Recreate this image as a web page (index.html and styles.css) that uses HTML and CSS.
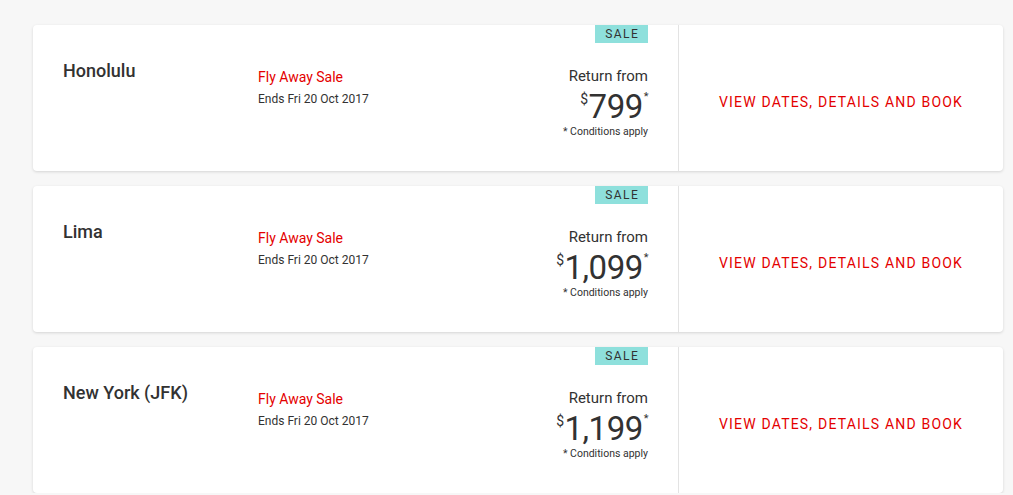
FILE: index.html
```html
<!DOCTYPE html>
<html lang="en">
<head>
    <meta charset="UTF-8">
    <meta name="viewport" content="width=device-width, initial-scale=1.0">
    <title>Fly Away Sale</title>
    <link rel="stylesheet" href="styles.css">
</head>
<body>
    <main class="deals">
        <div class="deal">
            <div class="deal-info">
                <h2 class="city">Honolulu</h2>
                <div class="sale">
                    <div class="sale-name">Fly Away Sale</div>
                    <div class="sale-ends">Ends Fri 20 Oct 2017</div>
                </div>
                <div class="price">
                    <span class="badge">SALE</span>
                    <div class="price-label">Return from</div>
                    <div class="price-amount"><span class="currency">$</span>799<span class="star">*</span></div>
                    <div class="price-note">* Conditions apply</div>
                </div>
            </div>
            <a class="deal-cta" href="#">VIEW DATES, DETAILS AND BOOK</a>
        </div>

        <div class="deal">
            <div class="deal-info">
                <h2 class="city">Lima</h2>
                <div class="sale">
                    <div class="sale-name">Fly Away Sale</div>
                    <div class="sale-ends">Ends Fri 20 Oct 2017</div>
                </div>
                <div class="price">
                    <span class="badge">SALE</span>
                    <div class="price-label">Return from</div>
                    <div class="price-amount"><span class="currency">$</span>1,099<span class="star">*</span></div>
                    <div class="price-note">* Conditions apply</div>
                </div>
            </div>
            <a class="deal-cta" href="#">VIEW DATES, DETAILS AND BOOK</a>
        </div>

        <div class="deal">
            <div class="deal-info">
                <h2 class="city">New York (JFK)</h2>
                <div class="sale">
                    <div class="sale-name">Fly Away Sale</div>
                    <div class="sale-ends">Ends Fri 20 Oct 2017</div>
                </div>
                <div class="price">
                    <span class="badge">SALE</span>
                    <div class="price-label">Return from</div>
                    <div class="price-amount"><span class="currency">$</span>1,199<span class="star">*</span></div>
                    <div class="price-note">* Conditions apply</div>
                </div>
            </div>
            <a class="deal-cta" href="#">VIEW DATES, DETAILS AND BOOK</a>
        </div>
    </main>
</body>
</html>
```

FILE: styles.css
```css
body {
    font-family: Roboto, "Liberation Sans", sans-serif;
    margin: 0;
    padding: 25px 0 0 33px;
    background-color: #f7f7f7;
    color: #323232;
}
.deals {
    width: 970px;
    display: flex;
    flex-direction: column;
    gap: 15px;
}
.deal {
    display: flex;
    height: 146px;
    background: white;
    border-radius: 4px;
    box-shadow: 0 1px 3px rgba(0, 0, 0, 0.14);
}
.deal-info {
    width: 646px;
    display: flex;
    padding: 0 30px;
    box-sizing: border-box;
    border-right: 1px solid #e3e3e3;
}
.city {
    width: 195px;
    margin: 35px 0 0;
    font-size: 18px;
    line-height: 22px;
    font-weight: 500;
}
.sale {
    flex: 1;
    padding-top: 43px;
}
.sale-name {
    color: #e40000;
    font-size: 14px;
    line-height: 18px;
}
.sale-ends {
    margin-top: 5px;
    font-size: 12px;
    line-height: 16px;
}
.price {
    display: flex;
    flex-direction: column;
    align-items: flex-end;
    text-align: right;
}
.badge {
    width: 53px;
    height: 18px;
    background-color: #8ee0dc;
    font-size: 12px;
    line-height: 18px;
    letter-spacing: 1.5px;
    text-align: center;
    text-indent: 1.5px;
}
.price-label {
    margin-top: 24px;
    font-size: 15px;
    line-height: 18px;
}
.price-amount {
    margin-top: 5px;
    font-size: 33px;
    line-height: 33px;
    letter-spacing: -0.5px;
}
.currency {
    font-size: 14px;
    line-height: 0;
    vertical-align: 14px;
    margin-right: 1px;
}
.star {
    font-size: 11px;
    line-height: 0;
    vertical-align: 18px;
    margin-left: 1px;
}
.price-note {
    margin-top: 3px;
    font-size: 10.5px;
    line-height: 12px;
}
.deal-cta {
    flex: 1;
    display: flex;
    align-items: center;
    justify-content: center;
    padding-top: 8px;
    color: #e40000;
    font-size: 14px;
    letter-spacing: 1.2px;
    text-decoration: none;
}
```
